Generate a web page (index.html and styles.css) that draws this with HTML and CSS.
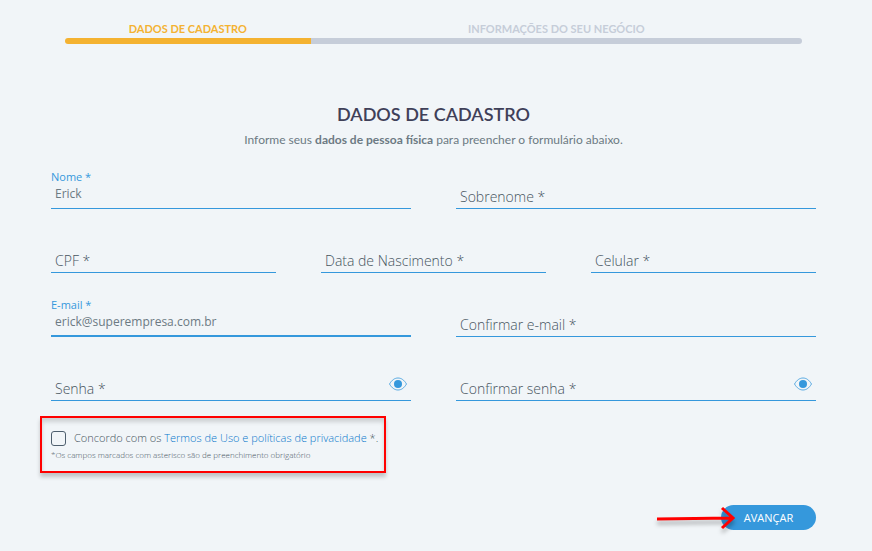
FILE: index.html
```html
<!DOCTYPE html>
<html lang="pt-BR">
<head>
    <meta charset="UTF-8">
    <meta name="viewport" content="width=device-width, initial-scale=1">
    <title>Dados de Cadastro</title>
    <link rel="stylesheet" href="styles.css">
</head>
<body>
    <main class="container">
        <ol class="steps">
            <li class="step active">Dados de Cadastro</li>
            <li class="step">Informações do seu negócio</li>
        </ol>

        <header class="intro">
            <h1>Dados de Cadastro</h1>
            <p>Informe seus <strong>dados de pessoa física</strong> para preencher o formulário abaixo.</p>
        </header>

        <form>
            <div class="row">
                <div class="field">
                    <input type="text" id="nome" value="Erick" placeholder=" " required>
                    <label for="nome">Nome *</label>
                </div>
                <div class="field">
                    <input type="text" id="sobrenome" placeholder=" " required>
                    <label for="sobrenome">Sobrenome *</label>
                </div>
            </div>
            <div class="row">
                <div class="field">
                    <input type="text" id="cpf" placeholder=" " required>
                    <label for="cpf">CPF *</label>
                </div>
                <div class="field">
                    <input type="text" id="nascimento" placeholder=" " required>
                    <label for="nascimento">Data de Nascimento *</label>
                </div>
                <div class="field">
                    <input type="tel" id="celular" placeholder=" " required>
                    <label for="celular">Celular *</label>
                </div>
            </div>
            <div class="row">
                <div class="field current">
                    <input type="email" id="email" value="erick@superempresa.com.br" placeholder=" " required>
                    <label for="email">E-mail *</label>
                </div>
                <div class="field">
                    <input type="email" id="confirmar-email" placeholder=" " required>
                    <label for="confirmar-email">Confirmar e-mail *</label>
                </div>
            </div>
            <div class="row">
                <div class="field">
                    <input type="password" id="senha" placeholder=" " required>
                    <label for="senha">Senha *</label>
                    <button type="button" class="eye" aria-label="Mostrar senha">
                        <svg width="18" height="14" viewBox="0 0 18 14">
                            <path d="M.5 7C3 2.800 5.800 1 9 1s6 1.800 8.500 6C15 11.200 12.200 13 9 13S3 11.200.5 7z" fill="none" stroke="#3598dc" stroke-width=".8"/>
                            <circle cx="9" cy="7" r="4" fill="#3598dc"/>
                        </svg>
                    </button>
                </div>
                <div class="field">
                    <input type="password" id="confirmar-senha" placeholder=" " required>
                    <label for="confirmar-senha">Confirmar senha *</label>
                    <button type="button" class="eye" aria-label="Mostrar senha">
                        <svg width="18" height="14" viewBox="0 0 18 14">
                            <path d="M.5 7C3 2.800 5.800 1 9 1s6 1.800 8.500 6C15 11.200 12.200 13 9 13S3 11.200.5 7z" fill="none" stroke="#3598dc" stroke-width=".8"/>
                            <circle cx="9" cy="7" r="4" fill="#3598dc"/>
                        </svg>
                    </button>
                </div>
            </div>

            <div class="terms">
                <div class="terms-check">
                    <input type="checkbox" id="termos" required>
                    <label for="termos">Concordo com os <a href="#">Termos de Uso e políticas de privacidade</a> *.</label>
                </div>
                <p>*Os campos marcados com asterisco são de preenchimento obrigatório</p>
            </div>

            <div class="actions">
                <div class="next">
                    <button type="submit" class="submit">Avançar</button>
                    <svg class="arrow" width="84" height="32" viewBox="0 0 84 32" fill="none" stroke="#f00" stroke-width="3">
                        <path d="M1 17L76 16M66 6L77 16L66 26"/>
                    </svg>
                </div>
            </div>
        </form>
    </main>
</body>
</html>
```

FILE: styles.css
```css
* {
    box-sizing: border-box;
}
body {
    margin: 0;
    background-color: #f1f5f8;
    color: #6c7a83;
    font-family: "Open Sans", sans-serif;
    font-size: 12px;
}
.container {
    padding: 20px 56px 20px 51px;
}

/* progress */
.steps {
    display: grid;
    grid-template-columns: 1fr 2fr;
    margin: 0 14px;
    padding: 0;
    list-style: none;
}
.step {
    color: #c6cdd9;
    font: bold 11px/18px Lato, sans-serif;
    text-align: center;
    text-transform: uppercase;
}
.step::after {
    content: "";
    display: block;
    height: 6px;
    border-radius: 0 3px 3px 0;
    background-color: #c6cdd9;
}
.step.active {
    color: #f4b231;
}
.step.active::after {
    border-radius: 3px 0 0 3px;
    background-color: #f4b231;
}

.intro {
    margin: 58px 0 19px;
    font-family: Lato, sans-serif;
    text-align: center;
}
h1 {
    margin: 0;
    color: #3f4058;
    font-size: 18px;
    font-weight: 600;
    line-height: 24px;
    text-transform: uppercase;
}
.intro p {
    margin: 4px 0 0;
    line-height: 20px;
}

/* fields with floating labels */
.row {
    display: flex;
    gap: 45px;
    margin-bottom: 24px;
}
.field {
    position: relative;
    flex: 1;
    min-width: 0;
    height: 40px;
    border-bottom: 1px solid #3598dc;
}
.field.current {
    border-bottom-width: 2px;
}
.field input {
    display: block;
    width: 100%;
    height: 32px;
    padding: 16px 4px 0;
    border: 0;
    outline: none;
    background: none;
    color: #6c7a83;
    font: 12px/16px "Open Sans", sans-serif;
}
.field label {
    position: absolute;
    top: 18px;
    left: 4px;
    color: #46545e;
    font-size: 14px;
    font-weight: 300;
    line-height: 20px;
    pointer-events: none;
}
.field input:not(:placeholder-shown) + label {
    top: 0;
    left: 0;
    color: #3598dc;
    font-size: 11px;
    font-weight: 400;
    line-height: 16px;
}
.eye {
    position: absolute;
    top: 16px;
    right: 4px;
    padding: 0;
    border: 0;
    background: none;
    cursor: pointer;
}
.eye svg {
    display: block;
}

.terms {
    width: fit-content;
    margin: -9px 0 0 -11px;
    padding: 12px 6px 10px 9px;
    border: 2px solid #f00;
    box-shadow: 0 4px 4px rgba(0, 0, 0, 0.2), inset 0 4px 4px rgba(0, 0, 0, 0.15);
    color: #46545e;
    font-size: 11px;
    font-weight: 300;
}
.terms-check {
    display: flex;
    align-items: center;
    gap: 8px;
    line-height: 16px;
}
.terms input {
    appearance: none;
    width: 15px;
    height: 15px;
    margin: 0;
    border: 1px solid #4e5f6e;
    border-radius: 3px;
}
.terms input:checked {
    background-color: #3598dc;
}
.terms a {
    color: #0a78cc;
    text-decoration: none;
}
.terms p {
    margin: 3px 0 0;
    font-size: 8px;
    line-height: 12px;
}

.actions {
    display: flex;
    justify-content: flex-end;
    margin-top: 32px;
}
.next {
    position: relative;
}
.submit {
    display: block;
    width: 95px;
    height: 25px;
    padding: 0;
    border: 0;
    border-radius: 13px;
    background-color: #3598dc;
    color: #fff;
    font: 11px "Open Sans", sans-serif;
    text-transform: uppercase;
    cursor: pointer;
}
/* pointer drawn over the button edge */
.arrow {
    position: absolute;
    top: -3px;
    left: -65px;
    filter: drop-shadow(0 4px 2px rgba(0, 0, 0, 0.3));
    pointer-events: none;
}
```
